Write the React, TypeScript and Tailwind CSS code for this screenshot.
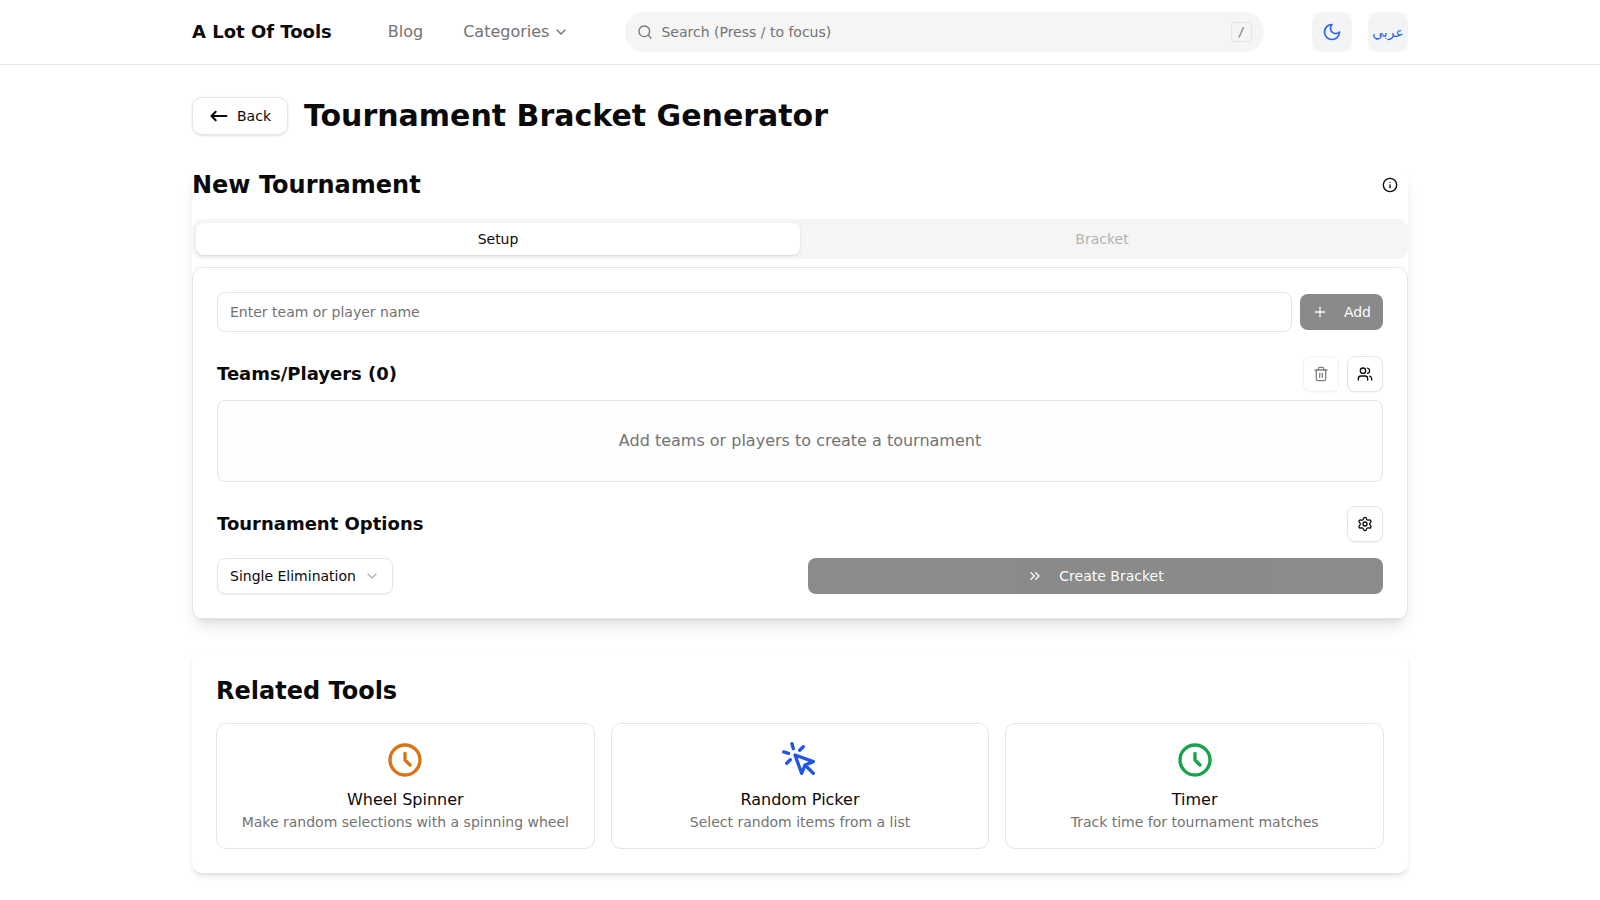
import { useState } from "react";
import type { ReactNode } from "react";
import { ChevronDown, ChevronsRight, Info, Plus, Search, Settings, Trash2, Users } from "lucide-react";

function ClockIcon() {
  return (
    <svg className="size-10" fill="none" viewBox="0 0 24 24" stroke="currentColor" strokeWidth={2} strokeLinecap="round" strokeLinejoin="round" aria-hidden="true">
      <path d="M12 8v4l3 3m6-3a9 9 0 11-18 0 9 9 0 0118 0z" />
    </svg>
  );
}

function PickerIcon() {
  return (
    <svg className="size-10" fill="none" viewBox="0 0 24 24" stroke="currentColor" strokeWidth={2} strokeLinecap="round" strokeLinejoin="round" aria-hidden="true">
      <path d="M15 15l-2 5L9 9l11 4-5 2zm0 0l5 5M7.188 2.239l.777 2.897M5.136 7.965l-2.898-.777M13.95 4.05l-2.122 2.122m-5.657 5.656l-2.12 2.122" />
    </svg>
  );
}

function MoonIcon() {
  return (
    <svg className="size-5" fill="none" viewBox="0 0 24 24" stroke="currentColor" strokeWidth={2} strokeLinecap="round" strokeLinejoin="round" aria-hidden="true">
      <path d="M12 3a6 6 0 0 0 9 9 9 9 0 1 1-9-9Z" />
    </svg>
  );
}

function ArrowIcon() {
  return (
    <svg className="size-5" fill="none" viewBox="0 0 24 24" stroke="currentColor" strokeWidth={2.5} strokeLinecap="round" strokeLinejoin="round" aria-hidden="true">
      <path d="M8 7l-5 5 5 5M3 12h18" />
    </svg>
  );
}

function IconButton({ label, disabled, children }: { label: string; disabled?: boolean; children: ReactNode }) {
  return (
    <button
      type="button"
      aria-label={label}
      disabled={disabled}
      className="flex size-9 items-center justify-center rounded-lg border border-neutral-200 bg-white shadow-xs disabled:opacity-50"
    >
      {children}
    </button>
  );
}

const relatedTools = [
  { name: "Wheel Spinner", text: "Make random selections with a spinning wheel", color: "text-[#d97316]", icon: <ClockIcon /> },
  { name: "Random Picker", text: "Select random items from a list", color: "text-[#2056e8]", icon: <PickerIcon /> },
  { name: "Timer", text: "Track time for tournament matches", color: "text-[#16a34a]", icon: <ClockIcon /> },
];

function Header() {
  return (
    <header className="border-b border-neutral-200">
      <div className="mx-auto flex h-16 max-w-7xl items-center px-8">
        <a href="#" className="text-lg font-bold">A Lot Of Tools</a>
        <nav className="ml-14 flex items-center gap-10 text-neutral-500">
          <a href="#">Blog</a>
          <button type="button" className="flex items-center gap-1">
            Categories
            <ChevronDown className="size-4" />
          </button>
        </nav>
        <label className="ml-14 flex h-10 flex-1 items-center gap-2 rounded-full bg-neutral-100 px-3 text-neutral-500">
          <Search className="size-4" />
          <input
            type="search"
            aria-label="Search tools"
            placeholder="Search (Press / to focus)"
            className="min-w-0 flex-1 bg-transparent text-sm outline-none placeholder:text-neutral-500"
          />
          <kbd className="flex h-5 items-center rounded border border-neutral-200 px-1.5 font-['DejaVu_Sans_Mono',monospace] text-xs">/</kbd>
        </label>
        <div className="ml-12 flex gap-4 text-[#2f62e6]">
          <button type="button" aria-label="Dark mode" className="flex size-10 items-center justify-center rounded-[10px] bg-gray-100">
            <MoonIcon />
          </button>
          <button type="button" lang="ar" className="flex size-10 items-center justify-center rounded-[10px] bg-gray-100 text-sm">
            عربي
          </button>
        </div>
      </div>
    </header>
  );
}

export default function App() {
  const [team, setTeam] = useState("");

  return (
    <div className="bg-white font-['DejaVu_Sans',sans-serif] text-neutral-950">
      <Header />
      <main className="mx-auto max-w-7xl px-8 pt-8 pb-6">
        <div className="mb-8 flex items-center gap-4">
          <a href="#" className="flex items-center gap-2 rounded-[10px] border border-neutral-200 px-4 py-2 text-sm shadow-sm">
            <ArrowIcon />
            Back
          </a>
          <h1 className="text-3xl font-bold">Tournament Bracket Generator</h1>
        </div>

        <section className="rounded-[10px] shadow-lg">
          <div className="mb-4 flex items-center justify-between">
            <h2 className="text-2xl font-bold">New Tournament</h2>
            <button type="button" aria-label="About tournaments" className="flex size-9 items-center justify-center">
              <Info className="size-4" />
            </button>
          </div>

          <div role="tablist" className="mb-2 grid h-10 grid-cols-2 rounded-[10px] bg-neutral-100 p-1 text-sm">
            <button type="button" role="tab" aria-selected="true" className="rounded-lg bg-white shadow-sm">Setup</button>
            <button type="button" role="tab" aria-selected="false" disabled className="text-neutral-500 opacity-50">Bracket</button>
          </div>

          <div className="flex flex-col gap-6 rounded-[10px] border border-neutral-200 bg-white p-6">
            <form className="flex items-center gap-2" onSubmit={(e) => e.preventDefault()}>
              <input
                type="text"
                aria-label="Team or player name"
                value={team}
                onChange={(e) => setTeam(e.target.value)}
                placeholder="Enter team or player name"
                className="h-10 min-w-0 flex-1 rounded-lg border border-neutral-200 px-3 text-sm placeholder:text-neutral-500"
              />
              <button type="submit" disabled={!team.trim()} className="flex h-9 items-center gap-4 rounded-lg bg-neutral-900 px-3 text-sm text-neutral-50 disabled:opacity-50">
                <Plus className="size-4" />
                Add
              </button>
            </form>

            <div className="flex flex-col gap-2">
              <div className="flex items-center justify-between">
                <h3 className="text-lg font-bold">Teams/Players (0)</h3>
                <div className="flex gap-2">
                  <IconButton label="Remove all" disabled><Trash2 className="size-4" /></IconButton>
                  <IconButton label="Add several"><Users className="size-4" /></IconButton>
                </div>
              </div>
              <p className="rounded-lg border border-neutral-200 bg-[#fefefe] p-7 text-center text-neutral-500">
                Add teams or players to create a tournament
              </p>
            </div>

            <div className="flex flex-col gap-4">
              <div className="flex items-center justify-between">
                <h3 className="text-lg font-bold">Tournament Options</h3>
                <IconButton label="Options"><Settings className="size-4" /></IconButton>
              </div>
              <div className="grid grid-cols-2 gap-4">
                <div className="grid w-fit items-center">
                  <select aria-label="Tournament type" className="col-start-1 row-start-1 h-9 appearance-none rounded-lg border border-neutral-200 bg-white pr-9 pl-3 text-sm shadow-xs">
                    <option>Single Elimination</option>
                  </select>
                  <ChevronDown className="pointer-events-none col-start-1 row-start-1 mr-[13px] size-4 justify-self-end opacity-30" />
                </div>
                <button type="button" disabled className="flex h-9 items-center justify-center gap-4 rounded-lg bg-neutral-900 text-sm text-neutral-50 disabled:opacity-50">
                  <ChevronsRight className="size-4" />
                  Create Bracket
                </button>
              </div>
            </div>
          </div>
        </section>

        <section className="mt-8 rounded-[10px] p-6 shadow-md">
          <h2 className="mb-4 text-2xl font-bold">Related Tools</h2>
          <div className="grid grid-cols-3 gap-4">
            {relatedTools.map((tool) => (
              <a key={tool.name} href="#" className="flex flex-col items-center rounded-[10px] border border-neutral-200 p-4 text-center">
                <span className={tool.color}>{tool.icon}</span>
                <span className="mt-2">{tool.name}</span>
                <span className="text-sm text-neutral-500">{tool.text}</span>
              </a>
            ))}
          </div>
        </section>
      </main>
    </div>
  );
}
